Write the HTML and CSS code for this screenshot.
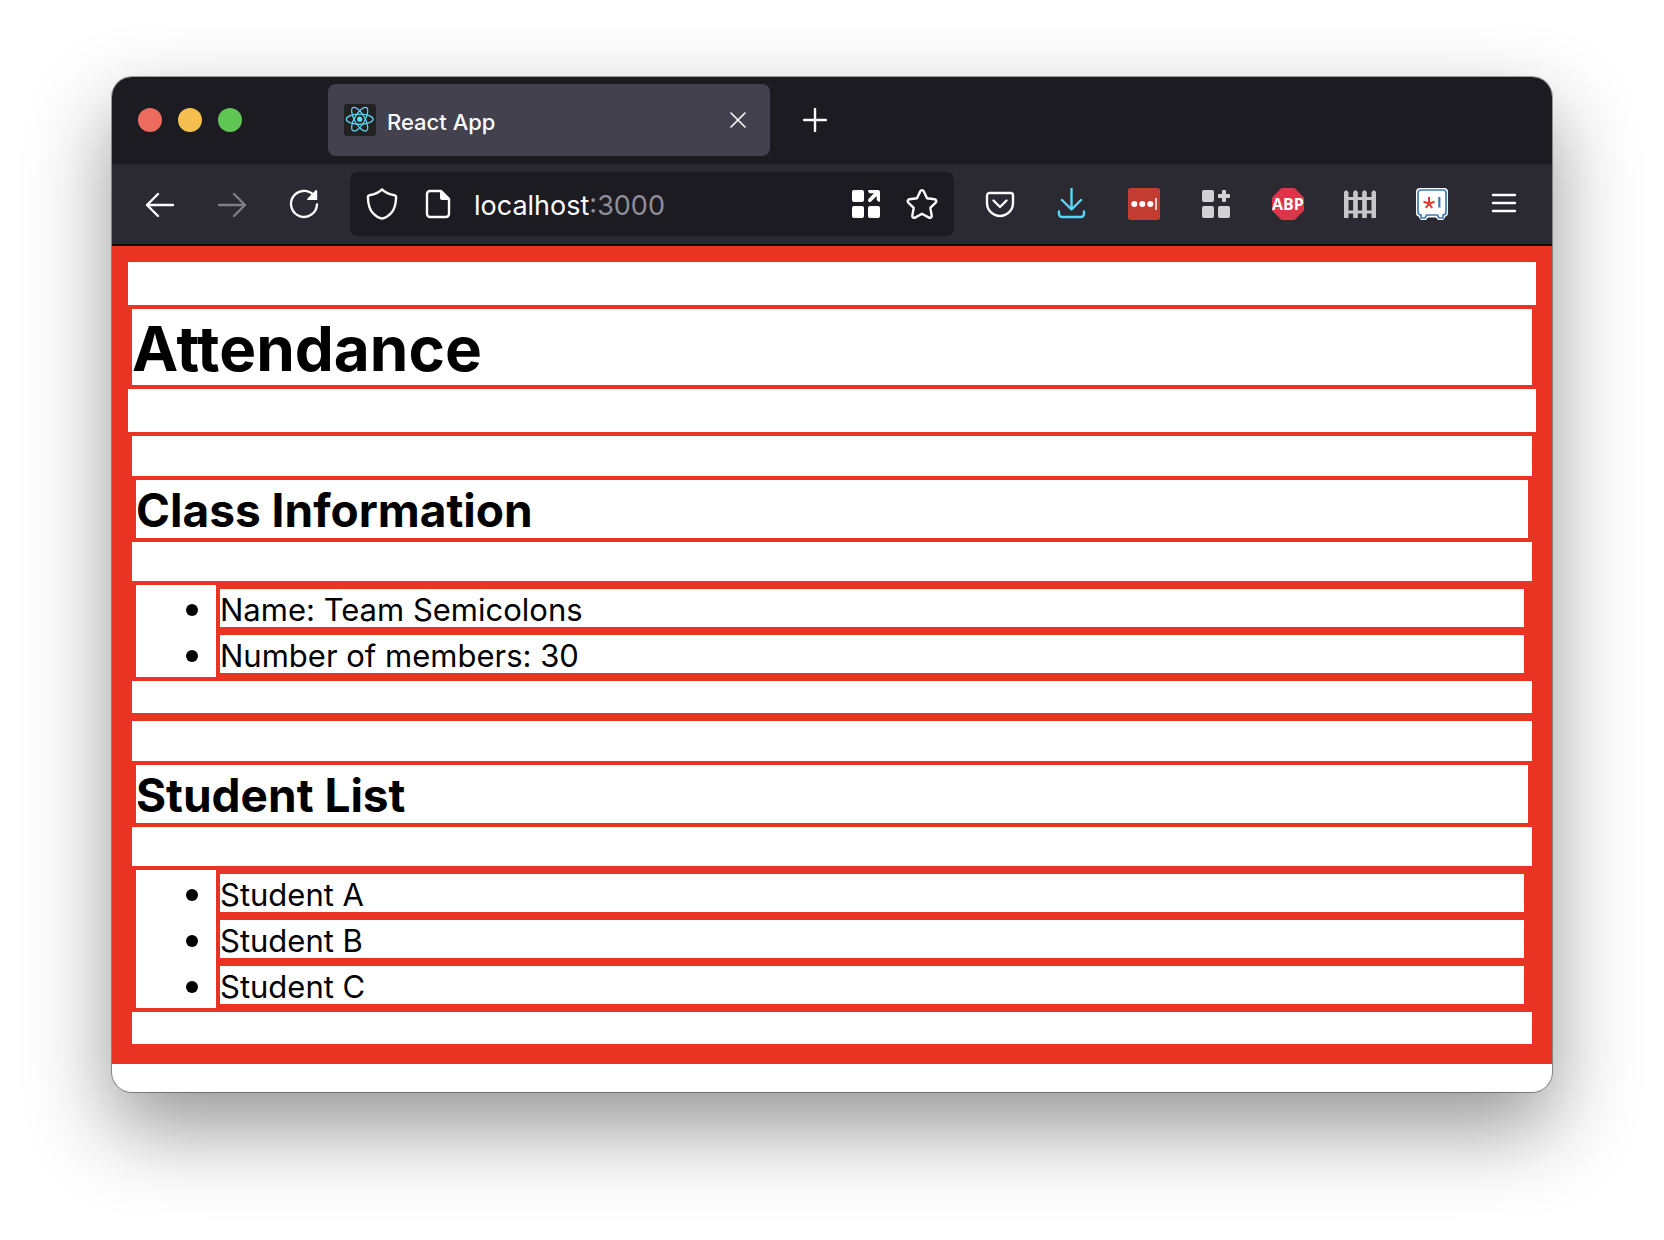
FILE: index.html
```html
<!DOCTYPE html>
<html lang="en">
<head>
<meta charset="utf-8">
<meta name="viewport" content="width=device-width, initial-scale=1">
<title>React App</title>
<link rel="stylesheet" href="styles.css">
</head>
<body>
<div class="window">
  <header class="tab-bar">
    <div class="window-controls">
      <button class="light light-close" aria-label="Close window"></button>
      <button class="light light-minimize" aria-label="Minimize window"></button>
      <button class="light light-zoom" aria-label="Zoom window"></button>
    </div>
    <div class="tab">
      <svg class="favicon" viewBox="0 0 32 32" aria-hidden="true">
        <rect width="32" height="32" rx="3" fill="#222"/>
        <g transform="translate(15.7 15.2)" fill="none" stroke="#61dafb" stroke-width="1.2">
          <ellipse rx="13.4" ry="5.1"/>
          <ellipse rx="13.4" ry="5.1" transform="rotate(60)"/>
          <ellipse rx="13.4" ry="5.1" transform="rotate(120)"/>
          <circle r="2.6" fill="#61dafb" stroke="none"/>
        </g>
      </svg>
      <span class="tab-title">React App</span>
      <button class="tab-close" aria-label="Close tab">
        <svg width="16" height="16" viewBox="0 0 16 16"><path d="M1 1l14 14M15 1L1 15" stroke="#fbfbfe" stroke-width="1.6" stroke-linecap="round"/></svg>
      </button>
    </div>
    <button class="new-tab" aria-label="New tab">
      <svg width="24" height="24" viewBox="0 0 24 24"><path d="M12 1v22M1 12h22" stroke="#fbfbfe" stroke-width="2.4" stroke-linecap="round"/></svg>
    </button>
  </header>

  <nav class="toolbar" aria-label="Navigation">
    <button class="tool" aria-label="Back">
      <svg width="32" height="32" viewBox="0 0 32 32"><path d="M29 17H3M14 6L3 17l11 11" class="line"/></svg>
    </button>
    <button class="tool tool-off" aria-label="Forward" disabled>
      <svg width="32" height="32" viewBox="0 0 32 32"><path d="M3 17h26M18 6l11 11-11 11" class="line"/></svg>
    </button>
    <button class="tool" aria-label="Reload">
      <svg width="32" height="32" viewBox="0 0 32 32"><path d="M29 16.500A13 13 0 1 1 25.500 7" class="line"/><path d="M29.200 2.800v9.200h-9.300c-.8 0-1.100-.8-.6-1.300l8.300-8.500c.6-.5 1.600-.2 1.600.6z" fill="#fbfbfe"/></svg>
    </button>

    <div class="url-bar">
      <button class="url-tool" aria-label="Tracking protection">
        <svg width="32" height="32" viewBox="0 0 32 32"><path d="M16 1.400C13 4.500 7.500 6.600 3.500 7.200 2.500 7.400 1.800 8.200 1.900 9.200 2 15 3.400 21.300 7 25.300 9.700 28.300 13 30 16 30.600c3-.6 6.300-2.300 9-5.300 3.600-4 5-10.300 5.100-16.100.1-1-.6-1.800-1.600-2C24.500 6.600 19 4.500 16 1.400z" class="line"/></svg>
      </button>
      <button class="url-tool" aria-label="Site information">
        <svg width="32" height="32" viewBox="0 0 32 32"><path d="M19 3H8a3 3 0 0 0-3 3v20a3 3 0 0 0 3 3h16a3 3 0 0 0 3-3V11z" class="line"/><path d="M18 2.500v7.500a2 2 0 0 0 2 2h8v-1.500L20 2.500z" fill="#fbfbfe"/></svg>
      </button>
      <label class="address">
        <input class="host" type="text" value="localhost" aria-label="Address" spellcheck="false"><span class="port">:3000</span>
      </label>
      <button class="url-tool" aria-label="Open in container">
        <svg width="32" height="32" viewBox="0 0 32 32" fill="#fff"><rect x="2" y="2" width="12" height="12" rx="2"/><rect x="2" y="18" width="12" height="12" rx="2"/><rect x="18" y="18" width="12" height="12" rx="2"/><path d="M19 2h9a2 2 0 0 1 2 2v9a1 1 0 0 1-1.700.6L26.700 12V8L21 13.500a1.700 1.700 0 0 1-2.500-2.500L24 5.300h-4.500L18.400 4A1.200 1.200 0 0 1 19 2z"/><path d="M20 12l7-7" stroke="#fff" stroke-width="3.400"/></svg>
      </button>
      <button class="url-tool" aria-label="Bookmark this page">
        <svg width="32" height="32" viewBox="0 0 32 32"><path d="M14.300 3.200c.7-1.400 2.700-1.400 3.400 0l3.300 7.100 7.600 1c1.700.2 2.300 2.100 1.100 3.300l-5.400 5.300 1.400 7.700c.3 1.600-1.400 2.700-2.800 2L16 25.800l-6.900 3.800c-1.400.7-3.100-.4-2.800-2l1.400-7.700-5.400-5.300c-1.200-1.200-.6-3.100 1.100-3.300l7.600-1z" class="line"/></svg>
      </button>
    </div>

    <button class="tool" aria-label="Save to Pocket">
      <svg width="32" height="32" viewBox="0 0 32 32"><path d="M5.500 5h21A2.500 2.500 0 0 1 29 7.500V15a13 13 0 0 1-26 0V7.500A2.500 2.500 0 0 1 5.500 5zM9.500 12.500L16 19l6.500-6.500" class="line"/></svg>
    </button>
    <button class="tool" aria-label="Downloads">
      <svg width="32" height="32" viewBox="0 0 32 32"><path d="M15.500 1v20M6 12l9.500 9.500L25 12M3 23.500V26a3 3 0 0 0 3 3h19a3 3 0 0 0 3-3v-2.500" class="line line-blue"/></svg>
    </button>
    <button class="tool" aria-label="Password manager">
      <svg width="32" height="32" viewBox="0 0 32 32"><rect width="32" height="32" rx="3" fill="#c43b32"/><g fill="#fff"><circle cx="6.300" cy="16" r="3"/><circle cx="14.300" cy="16" r="3"/><circle cx="22.300" cy="16" r="3"/><path d="M27 10h2v12h-2z" opacity=".75"/></g></svg>
    </button>
    <button class="tool" aria-label="Extensions">
      <svg width="32" height="32" viewBox="0 0 32 32" fill="#d2d2d6"><rect x="2" y="2" width="12" height="12" rx="2"/><rect x="2" y="18" width="12" height="12" rx="2"/><rect x="18" y="18" width="12" height="12" rx="2"/><path d="M22 3a1 1 0 0 1 1-1h2a1 1 0 0 1 1 1v3h3a1 1 0 0 1 1 1v2a1 1 0 0 1-1 1h-3v3a1 1 0 0 1-1 1h-2a1 1 0 0 1-1-1v-3h-3a1 1 0 0 1-1-1V7a1 1 0 0 1 1-1h3z"/></svg>
    </button>
    <button class="tool" aria-label="Ad blocker">
      <svg width="32" height="32" viewBox="0 0 32 32"><path d="M9.500 0h13L32 9.500v13L22.500 32h-13L0 22.500v-13z" fill="#dd3549"/><text x="16" y="22" text-anchor="middle" class="abp">ABP</text></svg>
    </button>
    <button class="tool" aria-label="Container fence">
      <svg width="32" height="32" viewBox="0 0 32 32" fill="#c8c8cb"><path d="M0 4l2-2 2.500 2v26H0zM9.200 4l2.300-2 2.300 2v26H9.200zM18.200 4l2.300-2 2.300 2v26h-4.600zM27.500 4l2.500-2 2 2v26h-4.500zM0 9h32v3H0zM0 22.500h32v3H0z"/></svg>
    </button>
    <button class="tool" aria-label="Password vault">
      <svg width="32" height="32" viewBox="0 0 32 32" fill="none"><path d="M4 0h24a4 4 0 0 1 4 4v21a4 4 0 0 1-3 3.800V30l-2 2h-5l-2-2.500h-8L10 32H5l-2-2v-1.200A4 4 0 0 1 0 25V4a4 4 0 0 1 4-4z" fill="#fff"/><path d="M5 2h22a3 3 0 0 1 3 3v19a3 3 0 0 1-3 3v3h-4l-1.500-3h-11L9 30H5v-3a3 3 0 0 1-3-3V5a3 3 0 0 1 3-3z" fill="#fff" stroke="#3b7ab8" stroke-width="1.700"/><path d="M13 9v6.500m0 0l-5.500-1.700m5.500 1.700l5.500-1.700M13 15.500L9.800 20m3.200-4.500l3.200 4.500" stroke="#dc3b33" stroke-width="2"/><path d="M23.300 9v10.500" stroke="#3b7ab8" stroke-width="2.200"/></svg>
    </button>
    <button class="tool" aria-label="Application menu">
      <svg width="32" height="32" viewBox="0 0 32 32"><path d="M5 7h22M5 15h22M5 23h22" class="line"/></svg>
    </button>
  </nav>

  <main class="page">
    <h1>Attendance</h1>
    <section>
      <h2>Class Information</h2>
      <ul>
        <li>Name: Team Semicolons</li>
        <li>Number of members: 30</li>
      </ul>
    </section>
    <section>
      <h2>Student List</h2>
      <ul>
        <li>Student A</li>
        <li>Student B</li>
        <li>Student C</li>
      </ul>
    </section>
  </main>
</div>
</body>
</html>
```
FILE: styles.css
```css
:root {
  --red: #e93323;
  --chrome-dark: #1c1b22;
  --chrome: #2b2a33;
  --tab: #42414d;
  --ink: #fbfbfe;
}

* {
  box-sizing: border-box;
}

body {
  margin: 0;
  padding: 77px 112px 148px;
  background: #fff;
  color: #000;
  font-family: Inter, "Liberation Sans", sans-serif;
}

button {
  display: flex;
  align-items: center;
  justify-content: center;
  padding: 0;
  border: 0;
  background: none;
}

svg {
  display: block;
}

.window {
  overflow: hidden;
  padding-bottom: 28px;
  border-radius: 20px;
  background: #fff;
  box-shadow: 0 0 0 1px rgba(0, 0, 0, 0.35), 0 36px 84px rgba(0, 0, 0, 0.42);
}

/* Tab strip */
.tab-bar {
  display: flex;
  align-items: center;
  height: 87px;
  padding: 0 0 1px 26px;
  background: var(--chrome-dark);
}

.window-controls {
  display: flex;
  gap: 16px;
  margin-right: 86px;
}

.light {
  width: 24px;
  height: 24px;
  border-radius: 50%;
}

.light-close {
  background: #ed6a5e;
}

.light-minimize {
  background: #f5bf4f;
}

.light-zoom {
  background: #61c554;
}

.tab {
  display: flex;
  align-items: center;
  gap: 11px;
  width: 442px;
  height: 72px;
  padding: 0 16px;
  border-radius: 8px;
  background: var(--tab);
}

.favicon {
  width: 32px;
  height: 32px;
}

.tab-title {
  flex: 1;
  padding-top: 4px;
  color: var(--ink);
  font-size: 22px;
  font-weight: 500;
  line-height: 32px;
}

.tab-close {
  width: 32px;
  height: 32px;
}

.new-tab {
  width: 72px;
  height: 72px;
  margin-left: 9px;
}

/* Navigation toolbar */
.toolbar {
  display: flex;
  align-items: center;
  height: 82px;
  padding: 0 12px;
  border-bottom: 2px solid #0c0c0d;
  background: var(--chrome);
}

.tool {
  flex: none;
  width: 72px;
  height: 64px;
}

.tool-off {
  opacity: 0.4;
}

.line {
  fill: none;
  stroke: var(--ink);
  stroke-width: 2.4;
  stroke-linecap: round;
  stroke-linejoin: round;
}

.line-blue {
  stroke: #54d9fb;
}

.abp {
  fill: #fff;
  font-family: "Open Sans", sans-serif;
  font-size: 16px;
  font-weight: 700;
}

.url-bar {
  display: flex;
  flex: 1;
  align-items: center;
  min-width: 0;
  height: 64px;
  margin: 0 10px;
  padding: 0 4px;
  border-radius: 8px;
  background: var(--chrome-dark);
}

.url-tool {
  flex: none;
  width: 56px;
  height: 56px;
}

.address {
  display: flex;
  flex: 1;
  min-width: 0;
  padding: 4px 0 0 8px;
  color: #8f8f99;
  font-size: 27px;
  line-height: 40px;
}

.host {
  field-sizing: content;
  padding: 0;
  border: 0;
  outline: 0;
  background: none;
  color: var(--ink);
  font: inherit;
}

/* Page content: every box is outlined so its margins show */
.page {
  border: 16px solid var(--red);
  background: #fff;
}

h1,
h2,
ul,
li,
section {
  border: 4px solid var(--red);
}

h1 {
  margin: 43px 0;
  padding-top: 4px;
  font-size: 62px;
  line-height: 72px;
}

.page,
section {
  display: flow-root;
}

h2,
li {
  padding-top: 2px;
}

h2 {
  margin: 40px 0 39px;
  font-size: 46px;
  line-height: 56px;
}

ul {
  margin: 0 0 32px;
  padding-left: 80px;
  font-size: 31px;
  line-height: 34px;
}

li::marker {
  font-size: 36px;
}
```
